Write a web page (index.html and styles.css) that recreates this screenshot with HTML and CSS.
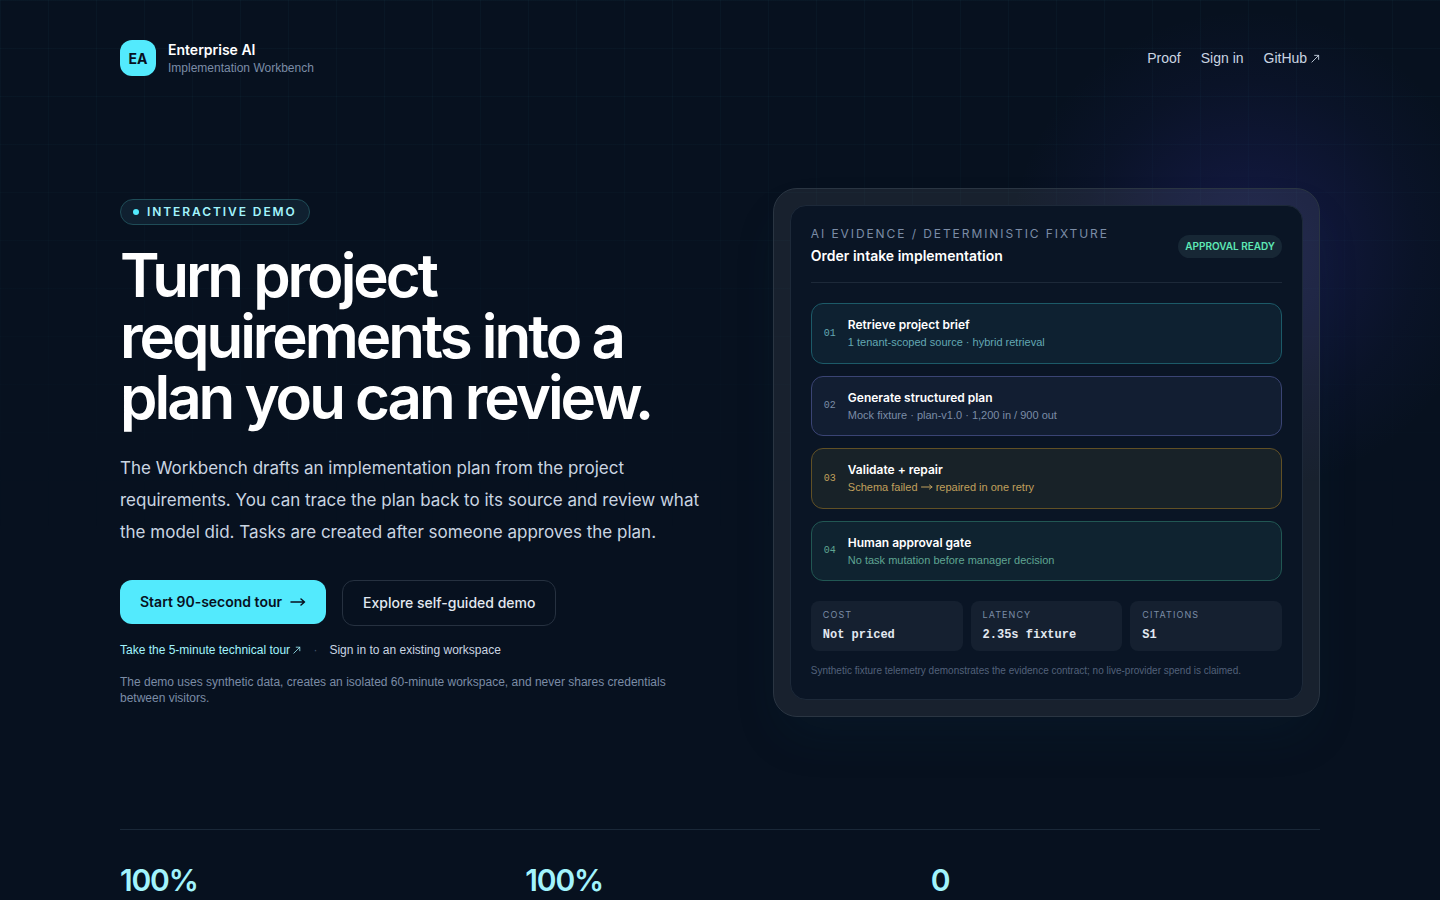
FILE: index.html
```html
<!DOCTYPE html>
<html lang="en">
<head>
<meta charset="utf-8">
<meta name="viewport" content="width=device-width, initial-scale=1">
<title>Enterprise AI Implementation Workbench</title>
<link rel="stylesheet" href="styles.css">
</head>
<body>
<div class="page">
  <div class="grid-lines" aria-hidden="true"></div>
  <div class="glow" aria-hidden="true"></div>
  <div class="container">
    <header class="header">
      <a class="brand" href="#">
        <span class="brand-mark">EA</span>
        <span class="brand-text">
          <span class="brand-name">Enterprise AI</span>
          <span class="brand-sub">Implementation Workbench</span>
        </span>
      </a>
      <nav class="nav">
        <a href="#proof">Proof</a>
        <a href="#signin">Sign in</a>
        <a href="#github">GitHub <svg class="arrow-out" viewBox="0 0 10 10" aria-hidden="true"><path d="M1 9 8.500 1.500M4 1.500h4.500v4.500"/></svg></a>
      </nav>
    </header>

    <main>
      <section class="hero">
        <div class="intro">
          <p class="badge"><span class="badge-dot"></span>INTERACTIVE DEMO</p>
          <h1 class="title">Turn project requirements into a plan you can review.</h1>
          <p class="lead">The Workbench drafts an implementation plan from the project requirements. You can trace the plan back to its source and review what the model did. Tasks are created after someone approves the plan.</p>
          <div class="actions">
            <button class="btn btn-primary" type="button">Start 90-second tour <svg class="arrow-right" viewBox="0 0 16 10" aria-hidden="true"><path d="M1 5h13.500M11 2 14.500 5 11 8"/></svg></button>
            <button class="btn btn-outline" type="button">Explore self-guided demo</button>
          </div>
          <div class="links">
            <a class="link-accent" href="#tour">Take the 5-minute technical tour <svg class="arrow-out small" viewBox="0 0 10 10" aria-hidden="true"><path d="M1 9 8.500 1.500M4 1.500h4.500v4.500"/></svg></a>
            <span class="sep">·</span>
            <a href="#signin">Sign in to an existing workspace</a>
          </div>
          <p class="note">The demo uses synthetic data, creates an isolated 60-minute workspace, and never shares credentials between visitors.</p>
        </div>

        <div class="frame">
          <div class="panel">
            <div class="panel-head">
              <div>
                <p class="eyebrow">AI EVIDENCE / DETERMINISTIC FIXTURE</p>
                <h2 class="panel-title">Order intake implementation</h2>
              </div>
              <span class="status">APPROVAL READY</span>
            </div>
            <ol class="steps">
              <li class="step cyan"><span class="num">01</span><div><h3>Retrieve project brief</h3><p>1 tenant-scoped source · hybrid retrieval</p></div></li>
              <li class="step indigo"><span class="num">02</span><div><h3>Generate structured plan</h3><p>Mock fixture · plan-v1.0 · 1,200 in / 900 out</p></div></li>
              <li class="step amber"><span class="num">03</span><div><h3>Validate + repair</h3><p>Schema failed <svg class="arrow-step" viewBox="0 0 12 8" aria-hidden="true"><path d="M0.500 4h10.500M8.500 2 11 4 8.500 6"/></svg> repaired in one retry</p></div></li>
              <li class="step green"><span class="num">04</span><div><h3>Human approval gate</h3><p>No task mutation before manager decision</p></div></li>
            </ol>
            <dl class="metrics">
              <div><dt>COST</dt><dd>Not priced</dd></div>
              <div><dt>LATENCY</dt><dd>2.35s fixture</dd></div>
              <div><dt>CITATIONS</dt><dd>S1</dd></div>
            </dl>
            <p class="fine">Synthetic fixture telemetry demonstrates the evidence contract; no live-provider spend is claimed.</p>
          </div>
        </div>
      </section>

      <section class="proof" id="proof">
        <p>100%</p>
        <p>100%</p>
        <p>0</p>
      </section>
    </main>
  </div>
</div>
</body>
</html>
```
FILE: styles.css
```css
* { box-sizing: border-box; margin: 0; padding: 0; }

body {
  background: #07111f;
  color: #fff;
  font-family: "Liberation Sans", Arial, sans-serif;
}

a { color: inherit; text-decoration: none; }
svg { fill: none; stroke: currentColor; stroke-linecap: round; stroke-linejoin: round; }
ol { list-style: none; }

.brand-mark, .brand-name, .badge, .title, .lead, .eyebrow, .panel-title, .status,
.step h3, .metrics dt, .proof { font-family: Inter, sans-serif; }

.page { position: relative; overflow: hidden; min-height: 100vh; }

.grid-lines {
  position: absolute;
  inset: 0;
  height: 560px;
  background-image:
    linear-gradient(rgba(103, 232, 249, 0.03) 1px, transparent 1px),
    linear-gradient(90deg, rgba(103, 232, 249, 0.03) 1px, transparent 1px);
  background-size: 48px 48px;
  mask-image: linear-gradient(#000, transparent);
}

.glow {
  position: absolute;
  top: 10px;
  right: -48px;
  width: 480px;
  height: 480px;
  background: radial-gradient(circle closest-side, rgba(79, 70, 229, 0.2), rgba(67, 56, 202, 0.14) 35%, rgba(67, 56, 202, 0.05) 70%, transparent);
}

.container { position: relative; max-width: 1248px; margin: 0 auto; padding: 40px 24px 0; }

.header { display: flex; align-items: center; justify-content: space-between; }
.brand { display: flex; align-items: center; gap: 12px; }
.brand-mark {
  display: grid;
  place-items: center;
  width: 36px;
  height: 36px;
  border-radius: 12px;
  background: #53eafd;
  color: #07111f;
  font-size: 14px;
  font-weight: 700;
}
.brand-text { display: flex; flex-direction: column; }
.brand-name { font-size: 14px; line-height: 20px; font-weight: 600; }
.brand-sub { font-size: 12px; line-height: 16px; color: #7b8ca6; }
.nav { display: flex; gap: 20px; font-size: 14px; line-height: 20px; color: #cad5e2; }
.arrow-out { width: 9px; height: 9px; }
.arrow-out.small { width: 8px; height: 8px; }

.hero {
  display: grid;
  grid-template-columns: 1.05fr 0.95fr;
  gap: 48px;
  align-items: center;
  padding: 112px 0;
}

.badge {
  display: inline-flex;
  align-items: center;
  gap: 8px;
  padding: 4px 12px;
  border: 1px solid #1f4c57;
  border-radius: 999px;
  background: #0f2030;
  color: #a2f4fd;
  font-size: 12px;
  line-height: 16px;
  font-weight: 600;
  letter-spacing: 0.16em;
}
.badge-dot { width: 6px; height: 6px; border-radius: 50%; background: #53eafd; }

.title {
  margin-top: 20px;
  font-size: 60px;
  line-height: 61px;
  font-weight: 600;
  letter-spacing: -0.05em;
}
.lead { max-width: 600px; margin-top: 24px; font-size: 17px; line-height: 32px; color: #cad5e2; }

.actions { display: flex; align-items: flex-start; gap: 16px; margin-top: 32px; }
.btn {
  display: inline-flex;
  align-items: center;
  gap: 8px;
  padding: 12px 20px;
  border: 0;
  border-radius: 12px;
  font: 600 14px/20px Inter, sans-serif;
}
.btn-primary { background: #53eafd; color: #07111f; }
.btn-outline { border: 1px solid #263140; background: transparent; color: #e2e8f0; font-weight: 500; }
.arrow-right { width: 16px; height: 10px; stroke-width: 1.5; }

.links { display: flex; gap: 12px; margin-top: 16px; font-size: 12px; line-height: 16px; color: #cad5e2; }
.link-accent { color: #a2f4fd; }
.sep { color: #45556c; }
.note { max-width: 576px; margin-top: 16px; font-size: 12px; line-height: 16px; color: #7b8ca6; }

.frame {
  padding: 16px;
  border: 1px solid #2a3542;
  border-radius: 24px;
  background: rgba(255, 255, 255, 0.07);
  box-shadow: 0 25px 50px -12px rgba(8, 51, 68, 0.2);
}
.panel { padding: 20px; border: 1px solid #1d2939; border-radius: 16px; background: #0a1525; }
.panel-head {
  display: flex;
  align-items: center;
  justify-content: space-between;
  padding-bottom: 16px;
  border-bottom: 1px solid #1d2939;
}
.eyebrow { font-size: 12px; line-height: 16px; letter-spacing: 0.16em; color: #7b8ca6; }
.panel-title { margin-top: 4px; font-size: 14px; line-height: 20px; font-weight: 600; }
.status {
  padding: 4px 7px;
  border-radius: 999px;
  background: #172735;
  color: #5ee9b5;
  font-size: 10px;
  line-height: 15px;
  font-weight: 600;
}

.steps { display: grid; gap: 12px; margin-top: 20px; }
.step { display: flex; align-items: center; gap: 12px; padding: 12px; border: 1px solid; border-radius: 12px; }
.num { font: 10px/15px "Liberation Mono", monospace; }
.step h3 { color: #fff; font-size: 12px; line-height: 18px; font-weight: 600; }
.step p { font-size: 11px; line-height: 1.5; }
.arrow-step { width: 12px; height: 8px; }
.cyan { border-color: #1c5a68; background: #0e2131; color: #63a8b3; }
.indigo { border-color: #3a4474; background: #121e32; color: #7b8ca6; }
.amber { border-color: #615025; background: #182228; color: #c0a05c; }
.green { border-color: #215753; background: #0f2330; color: #5fa592; }

.metrics { display: grid; grid-template-columns: repeat(3, 1fr); gap: 8px; margin-top: 20px; }
.metrics div { padding: 7px 12px; border-radius: 8px; background: #152030; }
.metrics dt { font-size: 9px; line-height: 14px; letter-spacing: 0.12em; color: #7b8ca6; }
.metrics dd { margin-top: 4px; font: bold 12px/18px "Liberation Mono", monospace; color: #e2e8f0; }
.fine { margin-top: 12px; font-size: 10px; line-height: 16px; color: #52617a; }

.proof {
  display: grid;
  grid-template-columns: repeat(3, 1fr);
  gap: 16px;
  padding: 32px 0;
  border-top: 1px solid #1a2838;
  color: #a2f4fd;
  font-size: 30px;
  line-height: 36px;
  font-weight: 600;
  letter-spacing: -0.04em;
}
```
